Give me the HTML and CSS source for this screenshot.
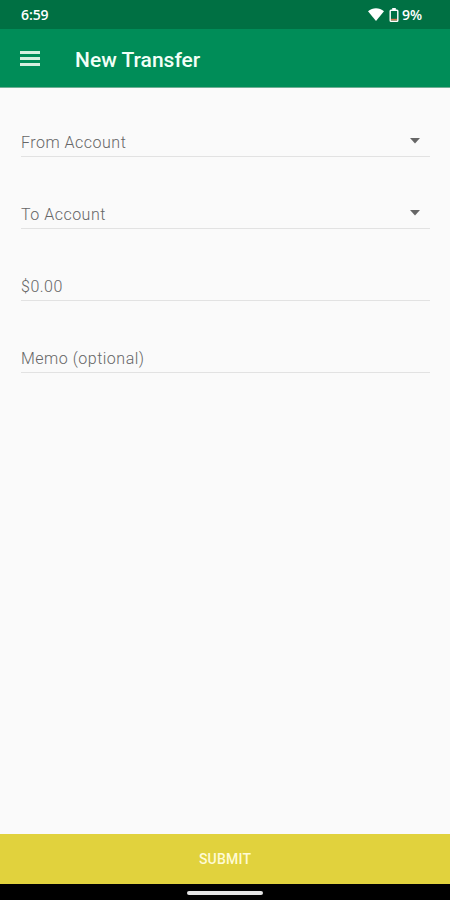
FILE: index.html
```html
<!DOCTYPE html>
<html lang="en">
<head>
    <meta charset="UTF-8">
    <title>New Transfer</title>
    <link rel="stylesheet" href="styles.css">
</head>
<body>
    <div class="screen">
        <div class="status-bar">
            <span class="time">6:59</span>
            <div class="status-icons">
                <svg class="wifi" width="16" height="13" viewBox="0 0 16 13">
                    <path d="M0 3.2C4.6-.9 11.4-.9 16 3.2L8 13z" fill="#fff"/>
                </svg>
                <svg class="battery" width="10" height="14" viewBox="0 0 10 14">
                    <path d="M3.2 0h3.6v2H3.2z" fill="#fff"/>
                    <rect x="1.2" y="2.2" width="7.6" height="11" rx=".8" fill="none" stroke="#fff" stroke-width="1.4"/>
                    <path d="M2 10.8h6v1.6H2z" fill="#d8794d"/>
                </svg>
                <span>9%</span>
            </div>
        </div>

        <header class="app-bar">
            <button class="menu-button" aria-label="Menu">
                <svg width="20" height="15" viewBox="0 0 20 15">
                    <path d="M0 0h20v3H0zM0 6h20v3H0zM0 12h20v3H0z" fill="#d6f0df"/>
                </svg>
            </button>
            <h1 class="title">New Transfer</h1>
        </header>

        <form class="transfer-form">
            <div class="field">
                <span class="field-label">From Account</span>
                <svg class="caret" width="10" height="6" viewBox="0 0 10 6"><path d="M0 0h10L5 5.6z" fill="#666"/></svg>
            </div>
            <div class="field">
                <span class="field-label">To Account</span>
                <svg class="caret" width="10" height="6" viewBox="0 0 10 6"><path d="M0 0h10L5 5.6z" fill="#666"/></svg>
            </div>
            <div class="field">
                <span class="field-label">$0.00</span>
            </div>
            <div class="field">
                <span class="field-label">Memo (optional)</span>
            </div>
        </form>

        <button class="submit-button">SUBMIT</button>
        <div class="nav-bar">
            <div class="nav-handle"></div>
        </div>
    </div>
</body>
</html>
```

FILE: styles.css
```css
* {
    box-sizing: border-box;
}
body {
    margin: 0;
    font-family: Roboto, sans-serif;
}
button {
    border: 0;
    padding: 0;
    background: none;
    font-family: inherit;
}
.screen {
    display: flex;
    flex-direction: column;
    height: 900px;
    background: #fafafa;
}
.status-bar {
    display: flex;
    align-items: center;
    justify-content: space-between;
    height: 29px;
    padding: 0 28px 0 21px;
    background: #007043;
    color: #fff;
    font-family: "Open Sans", sans-serif;
    font-size: 14px;
    font-weight: 600;
    letter-spacing: -0.1px;
}
.status-icons {
    display: flex;
    align-items: center;
}
.battery {
    margin: 0 3px 0 5px;
}
.app-bar {
    display: flex;
    align-items: center;
    height: 59px;
    padding: 1px 20px 0;
    background: #008d58;
    border-bottom: 1px solid #6fae94;
}
.menu-button {
    display: flex;
    width: 20px;
}
.title {
    margin: 2px 0 0 35px;
    color: #f2fff7;
    font-size: 21px;
    font-weight: 500;
}
.transfer-form {
    flex: 1;
    padding: 41px 20px 0 21px;
}
.field {
    display: flex;
    align-items: center;
    justify-content: space-between;
    height: 28px;
    margin-bottom: 44px;
    padding-right: 10px;
    border-bottom: 1px solid #e2e2e2;
}
.field-label {
    color: #666;
    font-size: 16px;
    font-weight: 300;
    letter-spacing: 0.5px;
}
.caret {
    margin-bottom: 4px;
}
.submit-button {
    height: 50px;
    background: #e1d23d;
    color: #fffbd5;
    font-size: 14px;
    font-weight: 500;
    letter-spacing: 0.2px;
}
.nav-bar {
    display: flex;
    justify-content: center;
    height: 16px;
    padding-top: 7px;
    background: #000;
}
.nav-handle {
    width: 76px;
    height: 4px;
    border-radius: 2px;
    background: #e4e4e4;
}
```
